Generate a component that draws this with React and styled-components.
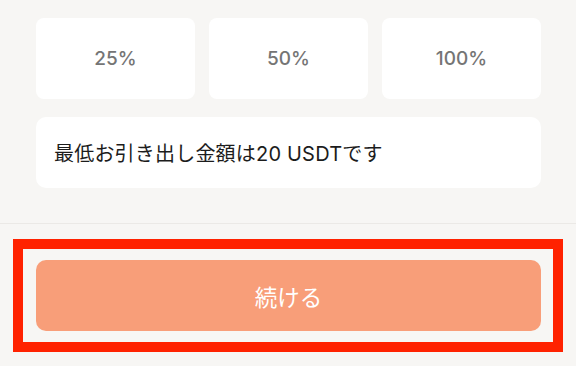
import styled, { createGlobalStyle } from 'styled-components'

const Global = createGlobalStyle`
  html, body {
    margin: 0;
    padding: 0;
    background: #f7f6f4;
    font-family: Inter, "Noto Sans CJK JP", sans-serif;
  }
`

const Page = styled.div`
  width: 576px;
  height: 366px;
  overflow: hidden;
  background: #f7f6f4;
`

const Top = styled.div`
  padding: 18px 35px 35px 36px;
  border-bottom: 1px solid #ebe9e6;
`

const Grid = styled.div`
  display: grid;
  grid-template-columns: repeat(3, 1fr);
  gap: 14px;
`

const Percent = styled.div`
  height: 81px;
  background: #fff;
  border-radius: 8px;
  display: flex;
  align-items: center;
  justify-content: center;
  font-size: 19px;
  font-weight: 500;
  color: #757575;
`

const Info = styled.div`
  margin-top: 18px;
  height: 71px;
  background: #fff;
  border-radius: 10px;
  display: flex;
  align-items: center;
  padding-left: 18px;
  font-size: 20px;
  letter-spacing: 0.2px;
  color: #1c1c1c;
`

const Footer = styled.div`
  padding: 15px 13px 0 13px;
`

const Frame = styled.div`
  border: 10px solid #ff2200;
  padding: 11px 12px 11px 13px;
`

const Button = styled.button`
  display: block;
  width: 100%;
  height: 71px;
  border: none;
  border-radius: 10px;
  background: #f89e79;
  color: #fff;
  font-family: inherit;
  font-size: 22.5px;
  cursor: pointer;
`

const App = () => {
  return (
    <Page>
      <Global />
      <Top>
        <Grid>
          {['25%', '50%', '100%'].map((p) => (
            <Percent key={p}>{p}</Percent>
          ))}
        </Grid>
        <Info>最低お引き出し金額は20 USDTです</Info>
      </Top>
      <Footer>
        <Frame>
          <Button>続ける</Button>
        </Frame>
      </Footer>
    </Page>
  )
}

export default App
